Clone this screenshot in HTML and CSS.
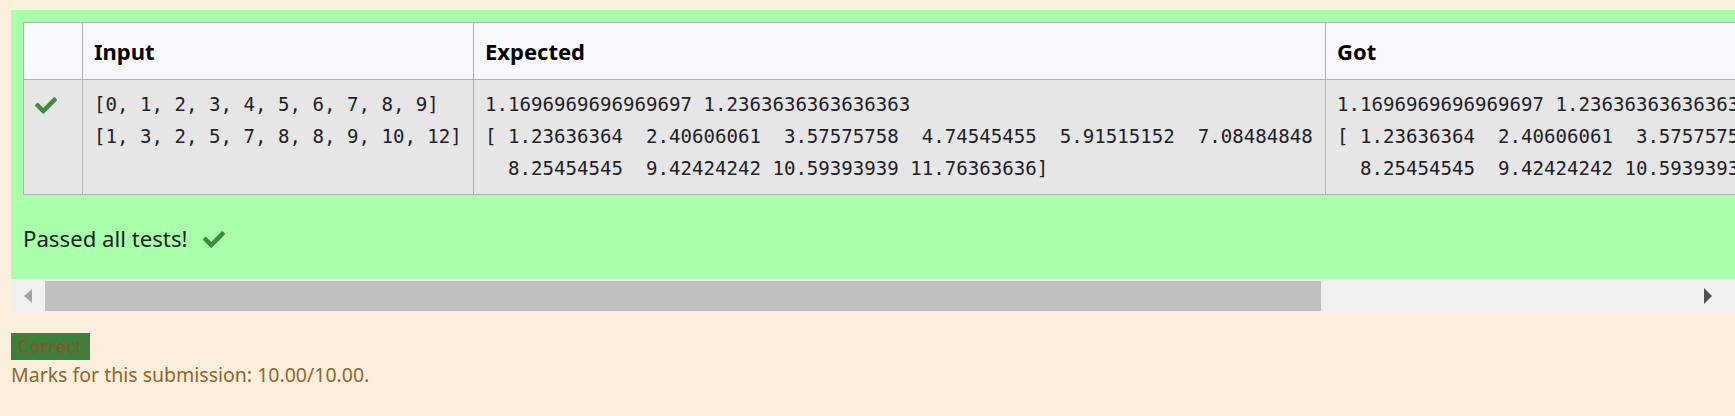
FILE: index.html
```html
<!DOCTYPE html>
<html lang="en">
<head>
<meta charset="utf-8">
<title>Test results</title>
<link rel="stylesheet" href="styles.css">
</head>
<body>
<div class="outcome">
  <div class="results">
    <table class="test-results">
      <thead>
        <tr>
          <th class="col-icon"></th>
          <th class="col-input">Input</th>
          <th class="col-out">Expected</th>
          <th class="col-out">Got</th>
        </tr>
      </thead>
      <tbody>
        <tr>
          <td class="col-icon"><svg class="check" viewBox="0 65 512 382" aria-hidden="true"><path d="M173.898 439.404l-166.4-166.4c-9.997-9.997-9.997-26.206 0-36.204l36.203-36.204c9.997-9.998 26.207-9.998 36.204 0L192 312.69 432.095 72.596c9.997-9.997 26.207-9.997 36.204 0l36.203 36.204c9.997 9.997 9.997 26.206 0 36.204l-294.4 294.401c-9.998 9.997-26.207 9.997-36.204-.001z"/></svg></td>
          <td><pre class="mono">[0, 1, 2, 3, 4, 5, 6, 7, 8, 9]
[1, 3, 2, 5, 7, 8, 8, 9, 10, 12]</pre></td>
          <td><pre class="mono">1.1696969696969697 1.2363636363636363
[ 1.23636364  2.40606061  3.57575758  4.74545455  5.91515152  7.08484848
  8.25454545  9.42424242 10.59393939 11.76363636]</pre></td>
          <td><pre class="mono">1.1696969696969697 1.2363636363636363
[ 1.23636364  2.40606061  3.57575758  4.74545455  5.91515152  7.08484848
  8.25454545  9.42424242 10.59393939 11.76363636]</pre></td>
        </tr>
      </tbody>
    </table>
    <p class="passed">Passed all tests! <svg class="check check-inline" viewBox="0 65 512 382" aria-hidden="true"><path d="M173.898 439.404l-166.4-166.4c-9.997-9.997-9.997-26.206 0-36.204l36.203-36.204c9.997-9.998 26.207-9.998 36.204 0L192 312.69 432.095 72.596c9.997-9.997 26.207-9.997 36.204 0l36.203 36.204c9.997 9.997 9.997 26.206 0 36.204l-294.4 294.401c-9.998 9.997-26.207 9.997-36.204-.001z"/></svg></p>
  </div>
  <div class="hscroll">
    <div class="sb-btn sb-left"><span class="tri-left"></span></div>
    <div class="sb-thumb"></div>
    <div class="sb-track"></div>
    <div class="sb-btn sb-right"><span class="tri-right"></span></div>
  </div>
</div>
<div class="grade">
  <span class="badge-correct">Correct</span>
  <div class="marks">Marks for this submission: 10.00/10.00.</div>
</div>
</body>
</html>
```

FILE: styles.css
```css
html, body {
  margin: 0;
  padding: 0;
  overflow: hidden;
}
body {
  background: #fcefdc;
  font-family: "Noto Sans", "Open Sans", sans-serif;
  color: #1d2125;
}
.outcome {
  margin: 10px 0 0 11px;
  background: #aaffaa;
  overflow: hidden;
}
.results {
  width: max-content;
  padding: 12px 12px 0 12px;
}
.test-results {
  border-collapse: collapse;
  border: 1px solid #b0b0b0;
}
.test-results th,
.test-results td {
  border: 1px solid #b0b0b0;
  text-align: left;
  vertical-align: top;
}
.test-results th {
  background: #f8f9fe;
  color: #000;
  font-weight: 700;
  font-size: 22px;
  line-height: 56px;
  height: 56px;
  padding: 0 11px;
}
.test-results td {
  background: #e6e6e6;
  padding: 9px 11px;
}
.col-icon { width: 36px; }
.col-input { width: 368px; }
.col-out { width: 829px; }
.mono {
  margin: 0;
  font-family: "DejaVu Sans Mono", "Liberation Mono", monospace;
  font-size: 19.1px;
  line-height: 32px;
  color: #1d2125;
  white-space: pre;
}
.check {
  display: block;
  width: 22px;
  height: 17px;
  fill: #3d8b40;
  margin-top: 8px;
}
.passed {
  margin: 0;
  padding: 27px 0 23px 0;
  font-size: 22.2px;
  line-height: 34px;
  color: #1d2125;
}
.check-inline {
  display: inline-block;
  margin: 0 0 0 10px;
  vertical-align: -1px;
}
.hscroll {
  display: flex;
  height: 34px;
  background: #f0f0f0;
}
.sb-btn {
  width: 34px;
  flex: none;
  display: flex;
  align-items: center;
}
.sb-left { justify-content: center; }
.sb-right { justify-content: flex-start; padding-left: 3px; box-sizing: border-box; }
.tri-left {
  width: 0;
  height: 0;
  border-top: 7px solid transparent;
  border-bottom: 7px solid transparent;
  border-right: 8px solid #a3a3a3;
}
.tri-right {
  width: 0;
  height: 0;
  border-top: 8px solid transparent;
  border-bottom: 8px solid transparent;
  border-left: 8px solid #505050;
}
.sb-thumb {
  width: 1276px;
  flex: none;
  margin: 2px 0;
  background: #c0c0c0;
}
.sb-track { flex: 1; }
.grade {
  margin: 20px 0 0 11px;
}
.badge-correct {
  display: inline-block;
  background: #3b813b;
  color: #7e5a2e;
  font-weight: 600;
  font-size: 18px;
  line-height: 27px;
  padding: 0 7px;
}
.marks {
  color: #8e662e;
  font-size: 19.5px;
  line-height: 30px;
}
```
